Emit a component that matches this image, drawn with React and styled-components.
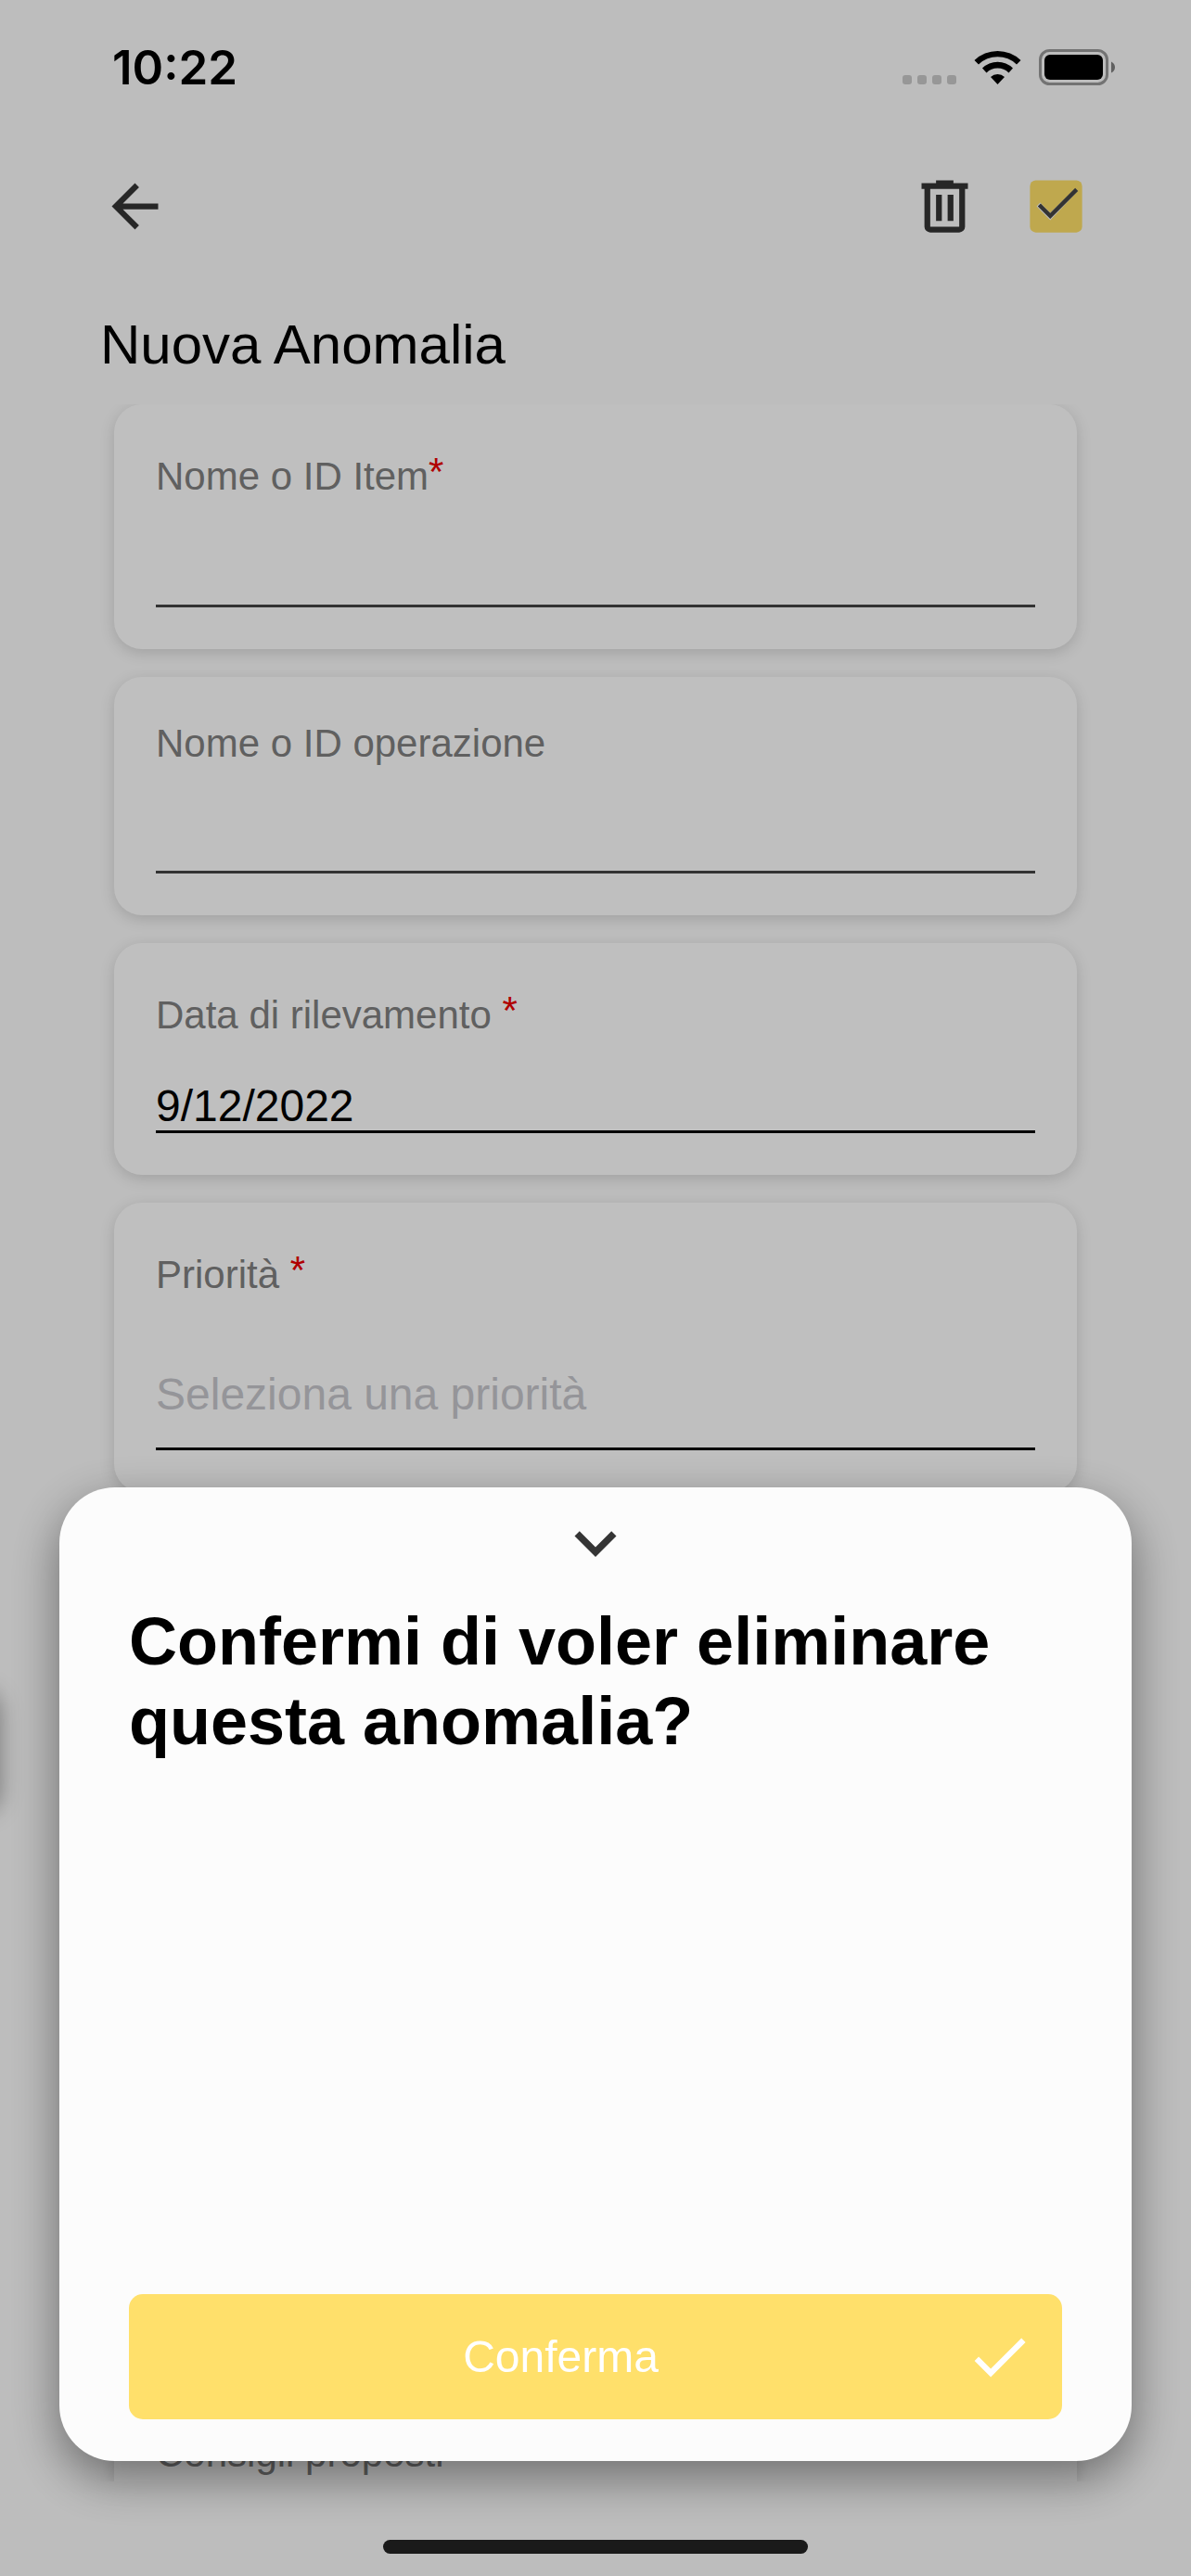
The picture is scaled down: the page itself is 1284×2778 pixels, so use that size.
import React, { useState } from 'react';
import styled, { createGlobalStyle } from 'styled-components';

const ICONS = {
  back: 'M20 11H7.83l5.59-5.59L12 4l-8 8 8 8 1.41-1.41L7.83 13H20v-2z',
  trash:
    'M9 3v1H4v2h1v13a2 2 0 0 0 2 2h10a2 2 0 0 0 2-2V6h1V4h-5V3H9M7 6h10v13H7V6m2 2v9h2V8H9m4 0v9h2V8h-2z',
  check: 'M9 16.17 4.83 12l-1.42 1.41L9 19 21 7l-1.41-1.41z',
  down: 'M16.59 8.59 12 13.17 7.41 8.59 6 10l6 6 6-6z',
};

const GlobalStyle = createGlobalStyle`
  * {
    box-sizing: border-box;
  }

  body {
    margin: 0;
    background: #fcfcfc;
    font-family: 'Liberation Sans', Arial, sans-serif;
    color: #000000;
  }

  button, input, select {
    font-family: inherit;
  }

  svg {
    display: block;
    flex-shrink: 0;
  }
`;

const Page = styled.div`
  position: relative;

  min-height: 100vh;

  display: flex;
  flex-direction: column;
  overflow: hidden;
`;

const StatusRow = styled.div`
  height: 141px;
  padding: 4px 81px 0 121px;

  display: flex;
  align-items: center;
  justify-content: space-between;
`;

const Time = styled.span`
  font-family: Inter, sans-serif;
  font-size: 51px;
  font-weight: 600;
  line-height: 60px;
`;

const Header = styled.header`
  padding: 44px 108px 0;

  display: flex;
  justify-content: space-between;
`;

const Actions = styled.div`
  display: flex;
  gap: 45px;
`;

const IconButton = styled.button`
  padding: 0;

  border: 0;
  background: none;
  color: #353535;
`;

const Title = styled.h1`
  margin: 76px 108px 28px;

  font-size: 60px;
  font-weight: 400;
  line-height: 72px;
`;

const Form = styled.form`
  flex: 1;
  padding: 0 123px;

  display: flex;
  flex-direction: column;
  gap: 30px;
  overflow: hidden;
`;

const Card = styled.div`
  padding: 48px 45px 45px;

  display: flex;
  flex-direction: column;

  border-radius: 30px;
  background: #ffffff;
  box-shadow: 0 4px 16px rgba(0, 0, 0, 0.15);
`;

const LastCard = styled(Card)`
  margin-top: auto;
  padding-bottom: 6px;

  border-radius: 30px 30px 0 0;
`;

const Label = styled.label`
  font-size: 42px;
  line-height: ${({ $required }) => ($required ? 60 : 48)}px;
  white-space: pre;
  color: #808080;
`;

const Star = styled.span`
  line-height: 0;
  vertical-align: 5px;
  color: #eb0000;
`;

const Input = styled.input`
  width: 100%;
  height: ${({ $height }) => $height}px;
  margin: 41px 0 0;
  padding: 0;

  border: 0;
  border-bottom: 3px solid ${({ $line = '#000000' }) => $line};
  border-radius: 0;
  outline: 0;
  background: none;
  font-size: 48px;
  color: #000000;
`;

const Select = styled.select`
  width: 100%;
  height: ${({ $height }) => $height}px;
  margin: 41px 0 0;
  padding: 0;

  appearance: none;
  border: 0;
  border-bottom: 3px solid #000000;
  border-radius: 0;
  outline: 0;
  background: none;
  font-size: 48px;
  color: #c7c7cd;
`;

const HomeArea = styled.div`
  padding: 63px 0 24px;

  display: flex;
  justify-content: center;
`;

const HomeIndicator = styled.div`
  width: 458px;
  height: 15px;

  border-radius: 8px;
  background: #232323;
`;

const SideHandle = styled.div`
  position: absolute;
  top: 1820px;
  left: -60px;

  width: 60px;
  height: 130px;

  border-radius: 20px;
  box-shadow: 0 4px 24px rgba(0, 0, 0, 0.35);
`;

const Overlay = styled.div`
  position: fixed;
  inset: 0;
  padding: 0 64px 124px;

  display: flex;
  align-items: flex-end;

  background: rgba(0, 0, 0, 0.25);
`;

const Sheet = styled.section`
  flex: 1;
  min-height: 1050px;
  padding: 15px 75px 45px;

  display: flex;
  flex-direction: column;

  border-radius: 60px;
  background: #fcfcfc;
  box-shadow: 0 18px 52px rgba(0, 0, 0, 0.43);
`;

const CloseButton = styled(IconButton)`
  align-self: center;
`;

const Question = styled.h2`
  margin: 18px 0 0;

  font-size: 72px;
  font-weight: 700;
  line-height: 86px;
`;

const Confirm = styled.button`
  margin-top: auto;
  padding: 30px;

  display: flex;
  align-items: center;

  border: 0;
  border-radius: 15px;
  background: #ffe06b;
  font-size: 48px;
  color: #ffffff;
`;

const ConfirmText = styled.span`
  flex: 1;
`;

function Icon({ name, size = 75 }) {
  return (
    <svg width={size} height={size} viewBox="0 0 24 24" fill="currentColor" aria-hidden="true">
      <path d={ICONS[name]} />
    </svg>
  );
}

function SaveIcon() {
  return (
    <svg width="75" height="75" viewBox="0 0 24 24" aria-hidden="true">
      <rect x="3" y="3" width="18" height="18" rx="2" fill="#ffe168" />
      <path d="M5.3 12 6.5 10.7 10 14.2 18.6 5.8 19.5 6.7 10 16.8z" fill="#fcfcfc" />
      <path d="M5.7 12 6.7 11 10 14.3 18.6 5.7 19.6 6.7 10 16.3z" fill="#444444" />
    </svg>
  );
}

function StatusBar() {
  return (
    <StatusRow>
      <Time>10:22</Time>
      <svg width="230" height="40" viewBox="0 0 230 40" aria-hidden="true">
        {[0, 16, 32, 48].map(x => (
          <rect key={x} x={x} y="28" width="10" height="10" rx="3" fill="#cacaca" />
        ))}
        <path d="M77.5 12 A36 36 0 0 1 127.5 12 L123 16.5 A29.5 29.5 0 0 0 82 16.5z" />
        <path d="M86 20.5 A23.5 23.5 0 0 1 119 20.5 L114.5 25.5 A17 17 0 0 0 90.5 25.5z" />
        <path d="M95 30 A11 11 0 0 1 110 30 L102.5 38z" />
        <rect x="148.5" y="1.5" width="72" height="36" rx="10" fill="none" stroke="#9a9a9a" strokeWidth="3" />
        <rect x="153" y="6" width="63" height="27" rx="6" />
        <path d="M225 13.5q4 2 4 6t-4 6z" fill="#808080" />
      </svg>
    </StatusRow>
  );
}

function Field({ id, label, required, spaced, children }) {
  return (
    <Card>
      <Label htmlFor={id} $required={required}>
        {label}
        {spaced && ' '}
        {required && <Star>*</Star>}
      </Label>
      {children}
    </Card>
  );
}

export default function App() {
  const [item, setItem] = useState('');
  const [operation, setOperation] = useState('');
  const [date, setDate] = useState('9/12/2022');

  return (
    <>
      <GlobalStyle />
      <Page>
        <StatusBar />
        <Header>
          <IconButton type="button" aria-label="Indietro">
            <Icon name="back" />
          </IconButton>
          <Actions>
            <IconButton type="button" aria-label="Elimina">
              <Icon name="trash" />
            </IconButton>
            <IconButton type="button" aria-label="Salva">
              <SaveIcon />
            </IconButton>
          </Actions>
        </Header>
        <Title>Nuova Anomalia</Title>

        <Form>
          <Field id="item" label="Nome o ID Item" required>
            <Input id="item" $height={70} $line="#444444" value={item} onChange={e => setItem(e.target.value)} />
          </Field>
          <Field id="operation" label="Nome o ID operazione">
            <Input
              id="operation"
              $height={75}
              $line="#444444"
              value={operation}
              onChange={e => setOperation(e.target.value)}
            />
          </Field>
          <Field id="date" label="Data di rilevamento" required spaced>
            <Input id="date" $height={56} value={date} onChange={e => setDate(e.target.value)} />
          </Field>
          <Field id="priority" label="Priorità" required spaced>
            <Select id="priority" $height={118} defaultValue="">
              <option value="">Seleziona una priorità</option>
            </Select>
          </Field>
          <LastCard>
            <Label as="span">Consigli proposti</Label>
          </LastCard>
        </Form>

        <HomeArea>
          <HomeIndicator />
        </HomeArea>
        <SideHandle />
      </Page>

      <Overlay>
        <Sheet role="dialog" aria-modal="true" aria-labelledby="sheet-title">
          <CloseButton type="button" aria-label="Chiudi">
            <Icon name="down" size={90} />
          </CloseButton>
          <Question id="sheet-title">Confermi di voler eliminare questa anomalia?</Question>
          <Confirm type="button">
            <ConfirmText>Conferma</ConfirmText>
            <Icon name="check" />
          </Confirm>
        </Sheet>
      </Overlay>
    </>
  );
}
